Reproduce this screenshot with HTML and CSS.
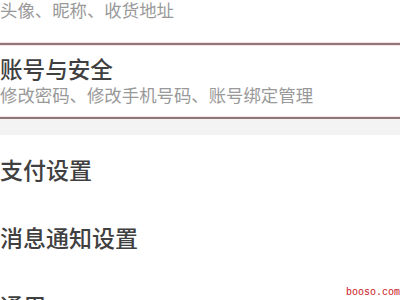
FILE: index.html
```html
<!DOCTYPE html>
<html lang="zh">
<head>
<meta charset="utf-8">
<link rel="stylesheet" href="styles.css">
</head>
<body>
<div class="page">
  <div class="prev">
    <div class="sub">头像、昵称、收货地址</div>
  </div>
  <div class="account">
    <div class="title">账号与安全</div>
    <div class="sub">修改密码、修改手机号码、账号绑定管理</div>
  </div>
  <div class="gap"></div>
  <div class="item">支付设置</div>
  <div class="item">消息通知设置</div>
  <div class="item">通用</div>
  <div class="mark">booso.com</div>
</div>
</body>
</html>
```
FILE: styles.css
```css
html, body {
  margin: 0;
  padding: 0;
  background: #fff;
}
.page {
  width: 400px;
  height: 300px;
  overflow: hidden;
  position: relative;
  font-family: "Noto Sans CJK SC", "Noto Sans", sans-serif;
}
.prev {
  height: 43px;
}
.sub {
  font-size: 17.4px;
  line-height: 20px;
  color: #999999;
}
.account {
  border-top: 2px solid #8e767b;
  border-bottom: 2px solid #8e767b;
  box-shadow: 0 -1px 0 #f6dede, 0 1px 0 #f6dede, inset 0 1px 0 #f8e4e4, inset 0 -1px 0 #f8e4e4;
  padding: 10px 0 12px;
}
.title {
  font-size: 22.6px;
  line-height: 28px;
  font-weight: 500;
  color: #404040;
  margin-bottom: 2px;
}
.gap {
  height: 16px;
  background: #f3f3f3;
}
.item {
  font-size: 23px;
  line-height: 28px;
  font-weight: 500;
  color: #404040;
  padding: 20px 0 20px;
}
.item:first-of-type {
  padding-top: 19px;
}
.mark {
  position: absolute;
  right: 0;
  bottom: 1px;
  font-family: "Liberation Mono", "DejaVu Sans Mono", monospace;
  font-size: 10px;
  line-height: 12px;
  color: #c8141e;
}
```
